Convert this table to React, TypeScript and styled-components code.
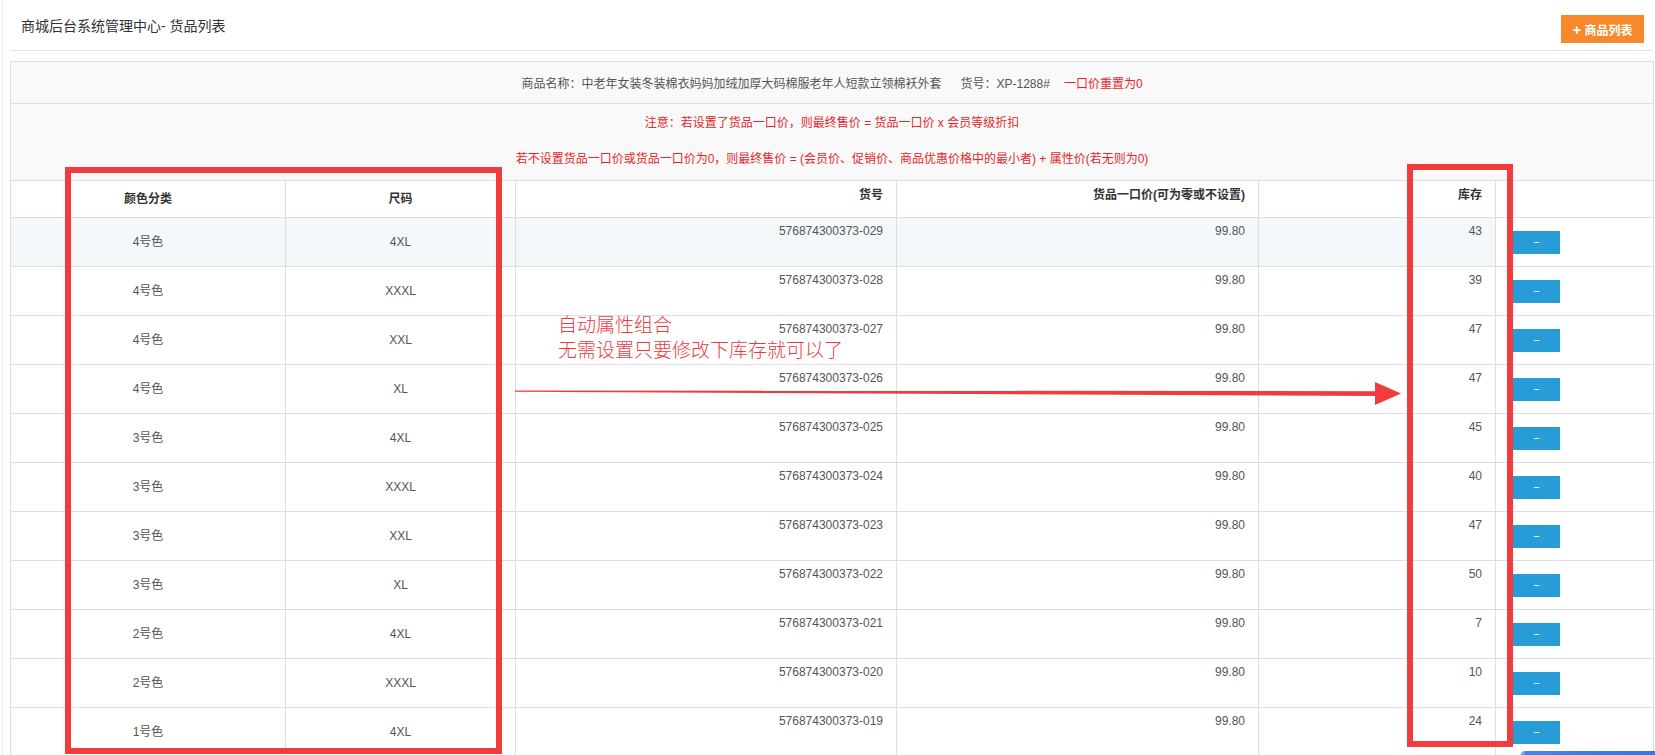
import React from "react";
import styled, { createGlobalStyle } from "styled-components";

const GlobalStyle = createGlobalStyle`
  html, body { margin: 0; padding: 0; background: #fff; }
  body {
    font-family: "Liberation Sans", "Noto Sans CJK SC", Arial, sans-serif;
    font-size: 12px;
    color: #555;
  }
  * { box-sizing: border-box; }
`;

const Root = styled.div`
  position: relative;
  width: 1655px;
  height: 755px;
  overflow: hidden;
`;

const Shell = styled.div`
  margin-left: 2px;
  border-left: 1px solid #ececec;
  padding: 0 2px 0 7px;
  height: 755px;
`;

const TopBar = styled.div`
  display: flex;
  justify-content: space-between;
  align-items: flex-start;
  height: 51px;
  border-bottom: 1px solid #e3e3e3;
`;

const Title = styled.h1`
  margin: 0;
  padding: 17px 0 0 11px;
  font-size: 14px;
  line-height: 18px;
  font-weight: normal;
  color: #333;
`;

const AddButton = styled.button`
  margin: 15px 9px 0 0;
  width: 83px;
  height: 28px;
  border: 0;
  border-radius: 0;
  background: #f7892a;
  color: #fff;
  font-family: inherit;
  font-size: 12px;
  font-weight: bold;
  display: flex;
  align-items: center;
  justify-content: center;
  gap: 3px;
  padding: 0;
`;

const Plus = styled.span`
  font-size: 15px;
  line-height: 1;
  font-weight: bold;
`;

const Table = styled.table`
  margin-top: 10px;
  width: 1643px;
  border-collapse: collapse;
  table-layout: fixed;
  border: 1px solid #dedede;
`;

const InfoCell = styled.td`
  height: 42px;
  padding: 0;
  background: #f9f9f9;
  border: 1px solid #dedede;
  text-align: center;
  color: #555;
  font-size: 12px;
`;

const Tag = styled.span<{ $red?: boolean; $gap: number }>`
  margin-left: ${(p) => p.$gap}px;
  color: ${(p) => (p.$red ? "#e6262b" : "#555")};
`;

const NoteCell = styled.td`
  height: 77px;
  padding: 1px 0 0;
  background: #f9f9f9;
  border: 1px solid #dedede;
  text-align: center;
  vertical-align: top;
`;

const NoteLine = styled.div`
  line-height: 36px;
  color: #e6262b;
  font-size: 12px;
`;

const Th = styled.th<{ $align: "center" | "right" | "left"; $mid?: boolean }>`
  height: 37px;
  padding: ${(p) => (p.$mid ? "0 13px" : "6px 13px 0")};
  border: 1px solid #dedede;
  background: #fff;
  color: #333;
  font-weight: bold;
  font-size: 12px;
  text-align: ${(p) => p.$align};
  vertical-align: ${(p) => (p.$mid ? "middle" : "top")};
  line-height: 16px;
`;

const Tr = styled.tr<{ $hover?: boolean }>`
  & > td { background: ${(p) => (p.$hover ? "#f3f8fb" : "#fff")}; }
  & > td:last-child { background: #fff; }
`;

const Td = styled.td<{ $align: "center" | "right" | "left"; $mid?: boolean }>`
  height: 49px;
  padding: ${(p) => (p.$mid ? "0 13px" : "5px 13px 0")};
  border: 1px solid #dedede;
  color: #555;
  font-size: 12px;
  line-height: 16px;
  text-align: ${(p) => p.$align};
  vertical-align: ${(p) => (p.$mid ? "middle" : "top")};
`;

const ActionCell = styled.td`
  height: 49px;
  padding: 0 0 0 17px;
  border: 1px solid #dedede;
  vertical-align: middle;
`;

const MinusButton = styled.button`
  display: block;
  width: 47px;
  height: 23px;
  border: 0;
  border-radius: 0;
  padding: 0;
  background: #279cd6;
  color: #fff;
  font-family: "Liberation Sans", sans-serif;
  font-size: 11px;
  line-height: 23px;
`;

const RedBox = styled.div`
  position: absolute;
  border: 6px solid #f23b3c;
  pointer-events: none;
`;

const Annotation = styled.div`
  position: absolute;
  left: 558px;
  top: 311px;
  font-family: "Noto Sans CJK SC", sans-serif;
  font-size: 19px;
  line-height: 25px;
  color: #ea3a3f;
  font-weight: 300;
  white-space: nowrap;
`;

const ArrowSvg = styled.svg`
  position: absolute;
  left: 510px;
  top: 375px;
  overflow: visible;
`;

const CornerWidget = styled.div`
  position: absolute;
  left: 1520px;
  top: 751px;
  width: 135px;
  height: 10px;
  border-radius: 5px 0 0 0;
  background: linear-gradient(to right, #a9c2ee 0, #4f82dc 6px, #3d73d6 100%);
`;

const rows: [string, string, string, string][] = [
  ["4号色", "4XL", "576874300373-029", "43"],
  ["4号色", "XXXL", "576874300373-028", "39"],
  ["4号色", "XXL", "576874300373-027", "47"],
  ["4号色", "XL", "576874300373-026", "47"],
  ["3号色", "4XL", "576874300373-025", "45"],
  ["3号色", "XXXL", "576874300373-024", "40"],
  ["3号色", "XXL", "576874300373-023", "47"],
  ["3号色", "XL", "576874300373-022", "50"],
  ["2号色", "4XL", "576874300373-021", "7"],
  ["2号色", "XXXL", "576874300373-020", "10"],
  ["1号色", "4XL", "576874300373-019", "24"],
];

const colWidths = [275, 230, 381, 362, 237, 158];

export default function App() {
  return (
    <Root>
      <GlobalStyle />
      <Shell>
        <TopBar>
          <Title>商城后台系统管理中心- 货品列表</Title>
          <AddButton>
            <Plus>+</Plus>商品列表
          </AddButton>
        </TopBar>
        <Table>
          <colgroup>
            {colWidths.map((w, i) => (
              <col key={i} style={{ width: w }} />
            ))}
          </colgroup>
          <tbody>
            <tr>
              <InfoCell colSpan={6}>
                商品名称：中老年女装冬装棉衣妈妈加绒加厚大码棉服老年人短款立领棉袄外套
                <Tag $gap={19}>货号：XP-1288#</Tag>
                <Tag $gap={14} $red>
                  一口价重置为0
                </Tag>
              </InfoCell>
            </tr>
            <tr>
              <NoteCell colSpan={6}>
                <NoteLine>注意：若设置了货品一口价，则最终售价 = 货品一口价 x 会员等级折扣</NoteLine>
                <NoteLine>
                  若不设置货品一口价或货品一口价为0，则最终售价 = (会员价、促销价、商品优惠价格中的最小者) + 属性价(若无则为0)
                </NoteLine>
              </NoteCell>
            </tr>
            <tr>
              <Th $align="center" $mid>
                颜色分类
              </Th>
              <Th $align="center" $mid>
                尺码
              </Th>
              <Th $align="right">货号</Th>
              <Th $align="right">货品一口价(可为零或不设置)</Th>
              <Th $align="right">库存</Th>
              <Th $align="left"></Th>
            </tr>
            {rows.map((r, i) => (
              <Tr key={r[2]} $hover={i === 0}>
                <Td $align="center" $mid>
                  {r[0]}
                </Td>
                <Td $align="center" $mid>
                  {r[1]}
                </Td>
                <Td $align="right">{r[2]}</Td>
                <Td $align="right">99.80</Td>
                <Td $align="right">{r[3]}</Td>
                <ActionCell>
                  <MinusButton>−</MinusButton>
                </ActionCell>
              </Tr>
            ))}
          </tbody>
        </Table>
      </Shell>

      <RedBox style={{ left: 65, top: 167, width: 437, height: 587 }} />
      <RedBox style={{ left: 1407, top: 164, width: 106, height: 583 }} />
      <Annotation>
        自动属性组合
        <br />
        无需设置只要修改下库存就可以了
      </Annotation>
      <ArrowSvg width="900" height="40" viewBox="0 0 900 40">
        <polygon points="5,15.4 868,16.2 868,21 5,16.8" fill="#f23b3c" />
        <polygon points="865,7 891,18.6 865,30" fill="#f23b3c" />
      </ArrowSvg>
      <CornerWidget />
    </Root>
  );
}
